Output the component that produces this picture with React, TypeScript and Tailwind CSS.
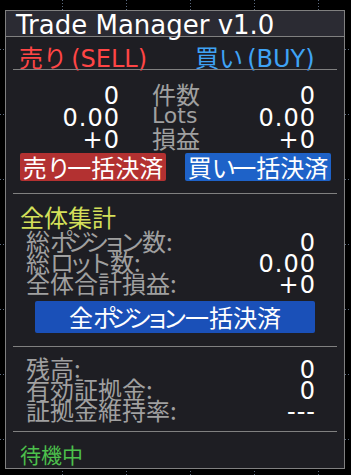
import React from "react";

const gridX = [62, 126, 190, 254, 318];
const gridY = [49, 114, 179, 244, 309, 374, 439];

function ChartGrid() {
  return (
    <svg className="absolute inset-0" width="351" height="475" viewBox="0 0 351 475">
      {gridX.map((x) => (
        <line key={"x" + x} x1={x + 0.5} y1={0} x2={x + 0.5} y2={475} stroke="#5d6b80" strokeWidth={1} strokeDasharray="1 2" />
      ))}
      {gridY.map((y) => (
        <line key={"y" + y} x1={0} y1={y + 0.5} x2={351} y2={y + 0.5} stroke="#5d6b80" strokeWidth={1} strokeDasharray="1 2" />
      ))}
    </svg>
  );
}

const cjk = "font-['Noto_Sans_CJK_JP',sans-serif] text-[24px]";
const lat = "font-['DejaVu_Sans','Noto_Sans_CJK_JP',sans-serif]";
const num = lat + " text-[24px] tracking-[1px] text-white";

function K({ children }: { children: React.ReactNode }) {
  return <span className="tracking-[-3.5px]">{children}</span>;
}
function KK({ children }: { children: React.ReactNode }) {
  return <span className="tracking-[-6.5px]">{children}</span>;
}
function KS({ children }: { children: React.ReactNode }) {
  return <span className="tracking-[-2px]">{children}</span>;
}
function KM({ children }: { children: React.ReactNode }) {
  return <span className="tracking-[-5px]">{children}</span>;
}

function Sep() {
  return <div className="mx-[7px] h-px shrink-0 bg-[#808080]" />;
}

function StatRow({ l, label, r, latin }: { l: string; label: string; r: string; latin?: boolean }) {
  return (
    <div className="flex h-[22px] shrink-0 leading-[22px]">
      <div className={"w-[114px] pt-[2px] text-right " + num}>{l}</div>
      <div className={"ml-[32px] w-[60px] text-[#a0a0a0] " + (latin ? lat + " text-[22px]" : cjk)}>{label}</div>
      <div className={"flex-1 pr-[28px] pt-[2px] text-right " + num}>{r}</div>
    </div>
  );
}

function InfoRow({ label, value }: { label: React.ReactNode; value: string }) {
  return (
    <div className="flex h-[21px] shrink-0 justify-between pl-[20px] pr-[28px] leading-[22px]">
      <div className={"text-[#a0a0a0] " + cjk}>{label}</div>
      <div className={"pt-[2px] " + num}>{value}</div>
    </div>
  );
}

export default function App() {
  return (
    <div className={"relative h-[475px] w-[351px] overflow-hidden bg-black " + lat}>
      <ChartGrid />
      <div className="relative ml-[5px] mt-[10px] flex h-[459px] w-[340px] flex-col border border-[#808080] bg-[#1e1e23]">
        <div className="h-[26px] shrink-0 border-b border-[#808080] bg-[#2b2b33] pl-[10px] text-[26px] leading-[28px] text-white">
          Trade Manager v1.0
        </div>
        <div className="flex h-[32px] shrink-0 pl-[13px] pt-[4px] text-[24px] leading-[32px]">
          <div className="w-[176px] text-[#ff4545]">
            <span className={cjk}>
              売<K>り</K>
            </span>
            <span> (SELL)</span>
          </div>
          <div className="text-[#3fa3f5]">
            <span className={cjk}>
              買<K>い</K>
            </span>
            <span> (BUY)</span>
          </div>
        </div>
        <Sep />
        <div className="mt-[13px] flex shrink-0 flex-col">
          <StatRow l="0" label="件数" r="0" />
          <StatRow l="0.00" label="Lots" r="0.00" latin />
          <StatRow l="+0" label="損益" r="+0" />
        </div>
        <div className="mt-[4px] flex shrink-0 gap-[19px] pl-[14px]">
          <div className={"h-[28px] w-[146px] rounded-[2px] bg-[#b33131] text-center leading-[27px] text-white " + cjk}>
            売<K>り</K>一括決済
          </div>
          <div className={"h-[28px] w-[146px] rounded-[2px] bg-[#1e62c8] text-center leading-[27px] text-white " + cjk}>
            買<K>い</K>一括決済
          </div>
        </div>
        <div className="mt-[12px]">
          <Sep />
        </div>
        <div className={"mt-[12px] h-[22px] shrink-0 pl-[14px] leading-[22px] text-[#d4e05a] " + cjk}>全体集計</div>
        <div className="mt-[2px] flex shrink-0 flex-col">
          <InfoRow
            label={
              <>
                総<KK>ポジショ</KK>
                <KS>ン</KS>数:
              </>
            }
            value="0"
          />
          <InfoRow
            label={
              <>
                総<KM>ロッ</KM>
                <KS>ト</KS>数:
              </>
            }
            value="0.00"
          />
          <InfoRow label="全体合計損益:" value="+0" />
        </div>
        <div className={"ml-[29px] mt-[8px] h-[32px] w-[280px] shrink-0 rounded-[2px] bg-[#1a50b8] text-center leading-[32px] text-white " + cjk}>
          全<KK>ポジショ</KK>
          <KS>ン</KS>一括決済
        </div>
        <div className="mt-[13px]">
          <Sep />
        </div>
        <div className="mt-[10px] flex shrink-0 flex-col">
          <InfoRow label="残高:" value="0" />
          <InfoRow label="有効証拠金:" value="0" />
          <InfoRow label="証拠金維持率:" value="---" />
        </div>
        <div className="mt-[11px]">
          <Sep />
        </div>
        <div className="mt-[11px] h-[22px] shrink-0 pl-[14px] font-['Noto_Sans_CJK_JP',sans-serif] text-[21px] leading-[22px] text-[#4cc04c]">
          待機中
        </div>
      </div>
    </div>
  );
}
